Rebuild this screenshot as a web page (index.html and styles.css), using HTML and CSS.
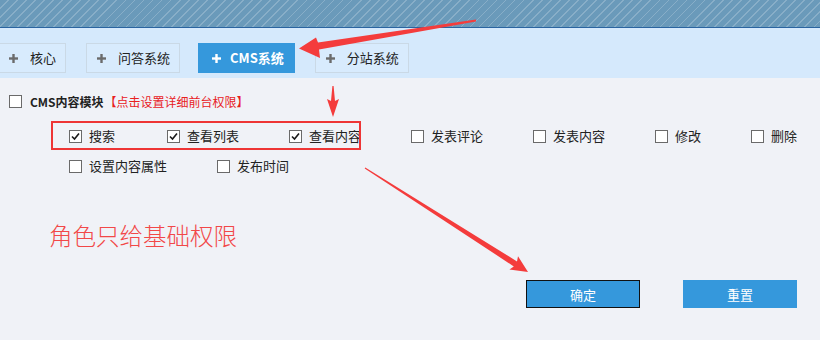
FILE: index.html
```html
<!DOCTYPE html>
<html>
<head>
    <title>角色权限设置</title>
    <link rel="stylesheet" href="styles.css">
</head>
<body>
    <div class="topbar"></div>

    <div class="tabbar">
        <ul class="tabs">
            <li class="tab"><svg class="plus" width="9" height="9" viewBox="0 0 9 9"><rect x="3.3" y="0" width="2.4" height="9"/><rect x="0" y="3.3" width="9" height="2.4"/></svg>核心</li>
            <li class="tab"><svg class="plus" width="9" height="9" viewBox="0 0 9 9"><rect x="3.3" y="0" width="2.4" height="9"/><rect x="0" y="3.3" width="9" height="2.4"/></svg>问答系统</li>
            <li class="tab active"><svg class="plus" width="9" height="9" viewBox="0 0 9 9"><rect x="3.3" y="0" width="2.4" height="9"/><rect x="0" y="3.3" width="9" height="2.4"/></svg>CMS系统</li>
            <li class="tab"><svg class="plus" width="9" height="9" viewBox="0 0 9 9"><rect x="3.3" y="0" width="2.4" height="9"/><rect x="0" y="3.3" width="9" height="2.4"/></svg>分站系统</li>
        </ul>
    </div>

    <div class="main">
        <div class="module">
            <div class="module-head">
                <span class="cb"></span>
                <span class="module-name">CMS内容模块</span>
                <span class="hint">【点击设置详细前台权限】</span>
            </div>
            <div class="perm-list">
                <div class="perm-row">
                    <label class="perm"><span class="cb checked"><svg width="11" height="11" viewBox="0 0 11 11"><polyline points="2,5.5 4.5,8 9,2.5"/></svg></span>搜索</label>
                    <label class="perm"><span class="cb checked"><svg width="11" height="11" viewBox="0 0 11 11"><polyline points="2,5.5 4.5,8 9,2.5"/></svg></span>查看列表</label>
                    <label class="perm"><span class="cb checked"><svg width="11" height="11" viewBox="0 0 11 11"><polyline points="2,5.5 4.5,8 9,2.5"/></svg></span>查看内容</label>
                    <label class="perm"><span class="cb"></span>发表评论</label>
                    <label class="perm"><span class="cb"></span>发表内容</label>
                    <label class="perm"><span class="cb"></span>修改</label>
                    <label class="perm"><span class="cb"></span>删除</label>
                </div>
                <div class="perm-row">
                    <label class="perm"><span class="cb"></span>设置内容属性</label>
                    <label class="perm"><span class="cb"></span>发布时间</label>
                </div>
            </div>
        </div>

        <div class="actions">
            <button class="btn btn-focus">确定</button>
            <button class="btn">重置</button>
        </div>
    </div>

    <!-- annotations drawn over the screenshot -->
    <div class="mark-box"></div>
    <div class="note">角色只给基础权限</div>
    <svg class="arrows" width="820" height="340" viewBox="0 0 820 340">
        <polygon points="476,19.5 318,42.5 316,37.5 299,48.5 320,58 319,49.5 476,21.5"/>
        <polygon points="332.4,86 333.6,86 335,101 339,99 333,117 327,99 331,101"/>
        <polygon points="365.3,167.6 517,261.4 518,256.2 528,272 509.4,269.6 513.8,266.4 364.7,168.4"/>
    </svg>
</body>
</html>
```

FILE: styles.css
```css
body {
    margin: 0;
    font-family: "Noto Sans CJK SC", "Microsoft YaHei", sans-serif;
    font-size: 13px;
    color: #222;
    background-color: #f0f2f7;
    position: relative;
    width: 820px;
    height: 340px;
    overflow: hidden;
}
.topbar {
    height: 27px;
    background-color: #6a9aba;
    background-image: repeating-linear-gradient(135deg, transparent 0, transparent 5.2px, rgba(255,255,255,0.2) 5.2px, rgba(255,255,255,0.2) 6.4px);
    border-bottom: 1px solid #2a64a0;
}
.tabbar {
    height: 50px;
    background-color: #d5e9fc;
    box-sizing: border-box;
    padding-top: 15px;
}
.tabs {
    list-style: none;
    margin: 0 0 0 -2px;
    padding: 0;
    display: flex;
    gap: 20px;
}
.tab {
    height: 30px;
    box-sizing: border-box;
    display: flex;
    align-items: center;
    padding: 0 9px 0 10px;
    border: 1px solid #cad9e6;
    background-color: #d8ebfd;
    line-height: 20px;
    white-space: nowrap;
}
.tab .plus {
    fill: #6b6b6b;
    margin-right: 12px;
}
.tab.active {
    background-color: #3598dc;
    border-color: #3598dc;
    color: #fff;
    font-weight: bold;
    padding-left: 13px;
    padding-right: 10px;
    margin-left: -2px;
}
.tab.active .plus {
    fill: #fff;
    margin-right: 9px;
}
.module {
    padding: 13px 0 0 9px;
}
.module-head {
    height: 20px;
    display: flex;
    align-items: center;
    font-size: 12px;
    white-space: nowrap;
}
.module-name {
    font-weight: bold;
    color: #222;
}
.hint {
    color: #e8201e;
    margin-left: 1px;
}
.cb {
    width: 13px;
    height: 13px;
    box-sizing: border-box;
    border: 1px solid #6a6a6a;
    background-color: #fff;
    margin-right: 7px;
    display: inline-flex;
    align-items: center;
    justify-content: center;
    flex: none;
}
.module-head .cb {
    margin-right: 8px;
}
.cb svg polyline {
    fill: none;
    stroke: #1a1a1a;
    stroke-width: 1.6;
}
.perm-list {
    padding-left: 60px;
    margin-top: 10px;
}
.perm-row {
    height: 30px;
    display: flex;
    align-items: center;
}
.perm {
    display: flex;
    align-items: center;
    flex: none;
    margin-right: 50px;
    line-height: 20px;
    white-space: nowrap;
}
.perm:first-child {
    margin-right: 52px;
}
.perm-row + .perm-row .perm:first-child {
    margin-right: 50px;
}
.actions {
    margin-top: 99px;
    display: flex;
    justify-content: flex-end;
    gap: 43px;
    padding-right: 23px;
}
.btn {
    width: 114px;
    height: 28px;
    box-sizing: border-box;
    background-color: #3598dc;
    border: 1px solid #3598dc;
    color: #fff;
    font-family: "Noto Sans CJK SC", "Microsoft YaHei", sans-serif;
    font-size: 13px;
    padding: 0;
    cursor: pointer;
}
.btn-focus {
    border-color: #111;
}
.mark-box {
    position: absolute;
    left: 51px;
    top: 121px;
    width: 310px;
    height: 29px;
    box-sizing: border-box;
    border: 2px solid #ee3535;
}
.note {
    position: absolute;
    left: 49px;
    top: 223px;
    font-size: 23.5px;
    line-height: 25px;
    font-weight: 300;
    color: #f24848;
    white-space: nowrap;
}
.arrows {
    position: absolute;
    left: 0;
    top: 0;
    fill: #f43c3c;
}
```
